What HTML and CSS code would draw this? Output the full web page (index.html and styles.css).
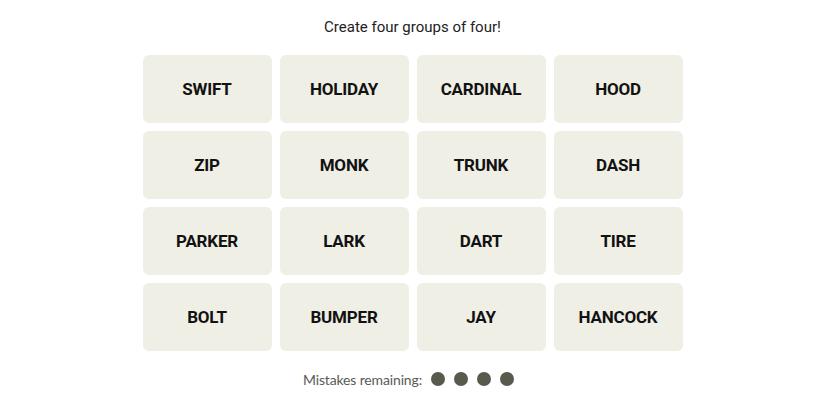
FILE: index.html
```html
<!DOCTYPE html>
<html>
<head>
<meta charset="utf-8">
<link rel="stylesheet" href="styles.css">
</head>
<body>
<main class="game">
  <p class="title">Create four groups of four!</p>
  <div class="grid">
    <div class="tile">SWIFT</div>
    <div class="tile">HOLIDAY</div>
    <div class="tile">CARDINAL</div>
    <div class="tile">HOOD</div>
    <div class="tile">ZIP</div>
    <div class="tile">MONK</div>
    <div class="tile">TRUNK</div>
    <div class="tile">DASH</div>
    <div class="tile">PARKER</div>
    <div class="tile">LARK</div>
    <div class="tile">DART</div>
    <div class="tile">TIRE</div>
    <div class="tile">BOLT</div>
    <div class="tile">BUMPER</div>
    <div class="tile">JAY</div>
    <div class="tile">HANCOCK</div>
  </div>
  <div class="mistakes">
    <span class="label">Mistakes remaining:</span>
    <span class="dots">
      <span class="dot"></span><span class="dot"></span><span class="dot"></span><span class="dot"></span>
    </span>
  </div>
</main>
</body>
</html>
```
FILE: styles.css
```css
html, body {
  margin: 0;
  padding: 0;
  background: #ffffff;
}
.game {
  display: flex;
  flex-direction: column;
  align-items: center;
  padding-top: 17px;
  font-family: "Liberation Sans", Arial, sans-serif;
}
.title {
  margin: 0;
  font-family: Roboto, "Liberation Sans", sans-serif;
  font-size: 15px;
  line-height: 20px;
  color: #222222;
}
.grid {
  margin-top: 18px;
  display: grid;
  grid-template-columns: repeat(4, 129px);
  grid-auto-rows: 68px;
  gap: 8px;
}
.tile {
  background: #efefe6;
  border-radius: 6px;
  display: flex;
  align-items: center;
  justify-content: center;
  padding-bottom: 1px;
  font-family: Roboto, "Liberation Sans", sans-serif;
  font-weight: 700;
  font-size: 17px;
  color: #121212;
  letter-spacing: -0.2px;
}
.mistakes {
  margin-top: 19px;
  margin-right: 8px;
  display: flex;
  align-items: center;
  gap: 9px;
  height: 18px;
}
.label {
  font-family: Lato, "Liberation Sans", sans-serif;
  font-size: 14px;
  letter-spacing: -0.15px;
  color: #5a5a55;
}
.dots {
  display: flex;
  gap: 9px;
}
.dot {
  width: 14px;
  height: 14px;
  border-radius: 50%;
  background: #5a594e;
}
```
